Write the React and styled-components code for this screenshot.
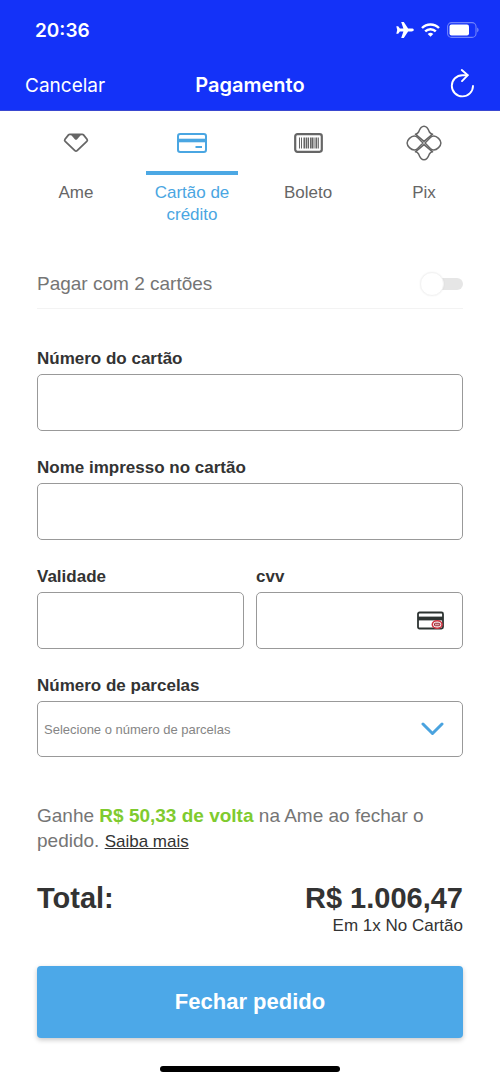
import React, { useState } from 'react';
import styled, { createGlobalStyle } from 'styled-components';

const GlobalStyle = createGlobalStyle`
  * {
    box-sizing: border-box;
  }

  body {
    margin: 0;
    background: #ffffff;
    color: #333333;
    font-family: 'Liberation Sans', Arial, sans-serif;
  }

  button,
  input,
  select {
    font-family: inherit;
  }
`;

const Page = styled.div`
  display: flex;
  flex-direction: column;
  min-height: 100vh;
`;

const Header = styled.header`
  background: #1432f8;
  color: #ffffff;
  font-family: Inter, sans-serif;
  border-bottom: 1px solid #3a48d0;
`;

const StatusBar = styled.div`
  display: flex;
  align-items: center;
  justify-content: space-between;
  height: 60px;
  padding: 0 21px 0 35px;
`;

const Clock = styled.span`
  font-size: 19px;
  font-weight: 600;
`;

const StatusIcons = styled.div`
  display: flex;
  align-items: center;
  gap: 7px;
`;

const NavBar = styled.nav`
  display: grid;
  grid-template-columns: 1fr auto 1fr;
  align-items: center;
  height: 50px;
  padding: 0 25px;
`;

const NavButton = styled.button`
  display: flex;
  justify-self: ${({ $end }) => ($end ? 'end' : 'start')};
  padding: 0;
  border: none;
  background: none;
  color: inherit;
  font-size: 19px;
  cursor: pointer;
`;

const Title = styled.h1`
  margin: 0;
  font-size: 20px;
  font-weight: 600;
`;

const Tabs = styled.div`
  display: grid;
  grid-template-columns: repeat(4, 1fr);
  padding: 0 18px;
`;

const Tab = styled.button`
  display: flex;
  flex-direction: column;
  align-items: stretch;
  padding: 0 12px;
  border: none;
  background: none;
  color: ${({ $active }) => ($active ? '#4aa6e2' : '#666666')};
  font-size: 17px;
  line-height: 22px;
  text-align: center;
  cursor: pointer;
`;

const TabIcon = styled.span`
  display: flex;
  align-items: center;
  justify-content: center;
  height: 64px;
  padding-top: 3px;
  margin-bottom: 7px;
  border-bottom: 4px solid ${({ $active }) => ($active ? '#4ca8e4' : 'transparent')};
`;

const Form = styled.form`
  display: flex;
  flex-direction: column;
  padding: 33px 37px 0;
`;

const SwitchRow = styled.label`
  display: flex;
  align-items: center;
  justify-content: space-between;
  height: 50px;
  margin-bottom: 40px;
  border-bottom: 1px solid #f3f3f3;
  color: #757575;
  font-size: 19px;
  cursor: pointer;
`;

const Switch = styled.input`
  appearance: none;
  display: flex;
  align-items: center;
  width: 40px;
  height: 12px;
  margin: 0;
  border-radius: 6px;
  background: #e6e6e6;
  cursor: pointer;

  &::before {
    content: '';
    flex: none;
    width: 22px;
    height: 22px;
    margin-left: -3px;
    border-radius: 50%;
    background: #ffffff;
    border: 1px solid #f3f3f3;
    box-shadow: 0 0 2px rgba(0, 0, 0, 0.06);
  }

  &:checked {
    justify-content: flex-end;
    background: #a6d4f2;
  }
`;

const Fields = styled.div`
  display: flex;
  flex-direction: column;
  gap: 27px;
`;

const Row = styled.div`
  display: grid;
  grid-template-columns: 1fr 1fr;
  gap: 12px;
`;

const Field = styled.div`
  display: flex;
  flex-direction: column;
  gap: 5px;
  min-width: 0;
`;

const Label = styled.label`
  font-size: 17px;
  font-weight: 700;
  line-height: 20px;
`;

const Control = styled.div`
  position: relative;
`;

const TextInput = styled.input`
  display: block;
  width: 100%;
  height: 57px;
  padding: 0 12px;
  border: 1px solid #999999;
  border-radius: 5px;
  background: #ffffff;
  color: #333333;
  font-size: 17px;
`;

const Select = styled.select`
  appearance: none;
  display: block;
  width: 100%;
  height: 56px;
  padding: 0 60px 0 6px;
  border: 1px solid #999999;
  border-radius: 5px;
  background: #ffffff;
  color: #858585;
  font-size: 13px;
`;

const ControlIcon = styled.span`
  position: absolute;
  top: 0;
  bottom: 0;
  right: 19px;
  display: flex;
  align-items: center;
  pointer-events: none;
`;

const Cashback = styled.p`
  margin: 46px 0 0;
  color: #757575;
  font-size: 19px;
  line-height: 25px;

  strong {
    color: #7fcb2f;
  }

  a {
    color: #333333;
    font-size: 17px;
  }
`;

const Summary = styled.div`
  display: flex;
  justify-content: space-between;
  margin-top: 26px;
`;

const Amount = styled.span`
  font-size: 29px;
  font-weight: 700;
  line-height: 36px;
`;

const Price = styled.div`
  display: flex;
  flex-direction: column;
  align-items: flex-end;
`;

const Installments = styled.span`
  font-size: 17px;
  line-height: 20px;
`;

const SubmitButton = styled.button`
  height: 72px;
  margin-top: 30px;
  border: none;
  border-radius: 4px;
  background: #4ca8e8;
  box-shadow: 0 2px 5px rgba(0, 0, 0, 0.22);
  color: #ffffff;
  font-size: 22px;
  font-weight: 700;
  cursor: pointer;
`;

const HomeIndicator = styled.div`
  width: 36%;
  height: 6px;
  margin: 28px auto 10px;
  border-radius: 3px;
  background: #000000;
`;

const AirplaneIcon = () => (
  <svg width="18" height="18" viewBox="0 0 18 18" fill="#fff" aria-hidden="true">
    <path d="M17.8 9c0-.9-1-1.400-2.200-1.400h-3.500L7.800 1H5.200l2.200 6.500H3.900L2.200 5.200H.3L1.200 9l-.9 3.800h1.900l1.700-2.300h3.500L5.200 17h2.600l4.300-6.600h3.500c1.200 0 2.200-.5 2.200-1.400z" />
  </svg>
);

const WifiIcon = () => (
  <svg width="19" height="14" viewBox="0 0 19 14" fill="none" stroke="#fff" strokeWidth="2.4" aria-hidden="true">
    <path d="M1 5a12 12 0 0 1 17 0" />
    <path d="M4.2 8.4a7.5 7.5 0 0 1 10.6 0" />
    <path d="M9.5 13.8 6.7 11a4 4 0 0 1 5.6 0z" fill="#fff" stroke="none" />
  </svg>
);

const BatteryIcon = () => (
  <svg width="32" height="16" viewBox="0 0 32 16" aria-hidden="true">
    <rect x="0.6" y="0.6" width="28.4" height="14.8" rx="4" fill="none" stroke="#fff" strokeOpacity="0.4" strokeWidth="1.1" />
    <rect x="2.5" y="2.5" width="19.5" height="11" rx="2" fill="#fff" />
    <path d="M30.3 5.6c1.6.8 1.6 4 0 4.8z" fill="#fff" fillOpacity="0.5" />
  </svg>
);

const ReloadIcon = () => (
  <svg width="26" height="32" viewBox="0 0 26 32" fill="none" stroke="#fff" strokeWidth="1.9" strokeLinecap="round" strokeLinejoin="round" aria-hidden="true">
    <path d="M24 16.9A10.6 10.6 0 1 1 13.4 6.2H18.5" />
    <path d="M12.8 1 18.8 6.2 13 12.1" />
  </svg>
);

const AmeIcon = () => (
  <svg width="26" height="20" viewBox="0 0 26 20" fill="none" stroke="#666" strokeWidth="1.8" strokeLinejoin="round" aria-hidden="true">
    <path d="M6.8 1.3h12.4q.8 0 1.3.6l3.5 4.4q.8 1.1-.2 2.1l-9.7 9.2q-1.1 1-2.2 0L2.2 8.4q-1-1-.2-2.1l3.5-4.4q.5-.6 1.3-.6z" />
    <path d="M7.5 1.3h11l-4.3 4.9q-1.2 1.2-2.4 0z" fill="#666" stroke="none" />
  </svg>
);

const CardIcon = () => (
  <svg width="30" height="20" viewBox="0 0 30 20" fill="none" stroke="#4aa6e2" aria-hidden="true">
    <rect x="1" y="1" width="28" height="18" rx="2.2" strokeWidth="2" />
    <path d="M1 7.5h28" strokeWidth="3.6" />
    <path d="M18.5 14H25" strokeWidth="2" />
  </svg>
);

const BoletoIcon = () => (
  <svg width="29" height="20" viewBox="0 0 29 20" fill="none" stroke="#666" aria-hidden="true">
    <rect x="1.2" y="1.2" width="26.6" height="17.6" rx="2.2" strokeWidth="2.2" />
    <path d="M5.5 4.5v11M7.500 4.500v11M14.500 4.500v11M20 4.500v11" strokeWidth="1" />
    <path d="M10.300 4.500v11M12.600 4.500v11M16.800 4.500v11M22.300 4.500v11" strokeWidth="1.7" />
    <path d="M18.500 4.500v11M24.300 4.500v11" strokeWidth="1.1" />
  </svg>
);

const PixIcon = () => (
  <svg width="36" height="36" viewBox="0 0 36 36" fill="none" stroke="#666" strokeWidth="1.5" strokeLinejoin="round" aria-hidden="true">
    {[0, 180].map((angle) => (
      <g key={angle} transform={`rotate(${angle} 18 18)`}>
        <path d="M18 16.400 9.400 9.200q2-.2 3.200-2.200Q14.700 1.200 18 1.200T23.400 7q1.200 2 3.200 2.200z" />
        <path d="M17 18 11.600 12.400Q10 11 8.200 11C5 11 1.100 15 1.100 18S5 25 8.200 25q1.800 0 3.400-1.400z" />
      </g>
    ))}
  </svg>
);

const CvvIcon = () => (
  <svg width="27" height="19" viewBox="0 0 27 19" fill="none" aria-hidden="true">
    <rect x="1" y="1.5" width="25" height="16" rx="1.5" stroke="#2e3432" strokeWidth="1.8" />
    <path d="M1 7.5h25" stroke="#2e3432" strokeWidth="3.8" />
    <ellipse cx="20.2" cy="13.5" rx="4.9" ry="3.7" fill="#fff" stroke="#cf3340" strokeWidth="1.6" />
    <rect x="17.5" y="12.2" width="5.4" height="2.6" rx="0.8" fill="#e6a0a4" stroke="#8c2c35" strokeWidth="1" />
  </svg>
);

const ChevronIcon = () => (
  <svg width="23" height="15" viewBox="0 0 23 15" fill="none" stroke="#4aa3df" strokeWidth="3" strokeLinecap="round" strokeLinejoin="round" aria-hidden="true">
    <path d="m2 2 9.5 9.5L21 2" />
  </svg>
);

const methods = [
  { id: 'ame', label: 'Ame', Icon: AmeIcon },
  { id: 'card', label: 'Cartão de crédito', Icon: CardIcon },
  { id: 'boleto', label: 'Boleto', Icon: BoletoIcon },
  { id: 'pix', label: 'Pix', Icon: PixIcon },
];

function App() {
  const [method, setMethod] = useState('card');
  const [twoCards, setTwoCards] = useState(false);

  return (
    <Page>
      <GlobalStyle />
      <Header>
        <StatusBar>
          <Clock>20:36</Clock>
          <StatusIcons>
            <AirplaneIcon />
            <WifiIcon />
            <BatteryIcon />
          </StatusIcons>
        </StatusBar>
        <NavBar>
          <NavButton type="button">Cancelar</NavButton>
          <Title>Pagamento</Title>
          <NavButton type="button" $end aria-label="Recarregar">
            <ReloadIcon />
          </NavButton>
        </NavBar>
      </Header>

      <Tabs role="tablist">
        {methods.map(({ id, label, Icon }) => (
          <Tab
            key={id}
            type="button"
            role="tab"
            aria-selected={method === id}
            $active={method === id}
            onClick={() => setMethod(id)}
          >
            <TabIcon $active={method === id}>
              <Icon />
            </TabIcon>
            {label}
          </Tab>
        ))}
      </Tabs>

      <Form onSubmit={(e) => e.preventDefault()}>
        <SwitchRow htmlFor="two-cards">
          Pagar com 2 cartões
          <Switch
            id="two-cards"
            type="checkbox"
            role="switch"
            checked={twoCards}
            onChange={(e) => setTwoCards(e.target.checked)}
          />
        </SwitchRow>

        <Fields>
          <Field>
            <Label htmlFor="number">Número do cartão</Label>
            <TextInput id="number" inputMode="numeric" />
          </Field>
          <Field>
            <Label htmlFor="name">Nome impresso no cartão</Label>
            <TextInput id="name" />
          </Field>
          <Row>
            <Field>
              <Label htmlFor="expiry">Validade</Label>
              <TextInput id="expiry" />
            </Field>
            <Field>
              <Label htmlFor="cvv">cvv</Label>
              <Control>
                <TextInput id="cvv" inputMode="numeric" />
                <ControlIcon>
                  <CvvIcon />
                </ControlIcon>
              </Control>
            </Field>
          </Row>
          <Field>
            <Label htmlFor="installments">Número de parcelas</Label>
            <Control>
              <Select id="installments" defaultValue="">
                <option value="">Selecione o número de parcelas</option>
              </Select>
              <ControlIcon>
                <ChevronIcon />
              </ControlIcon>
            </Control>
          </Field>
        </Fields>

        <Cashback>
          Ganhe <strong>R$ 50,33 de volta</strong> na Ame ao fechar o pedido.{' '}
          <a href="#saiba-mais">Saiba mais</a>
        </Cashback>

        <Summary>
          <Amount>Total:</Amount>
          <Price>
            <Amount>R$ 1.006,47</Amount>
            <Installments>Em 1x No Cartão</Installments>
          </Price>
        </Summary>

        <SubmitButton type="submit">Fechar pedido</SubmitButton>
      </Form>

      <HomeIndicator />
    </Page>
  );
}

export default App;
